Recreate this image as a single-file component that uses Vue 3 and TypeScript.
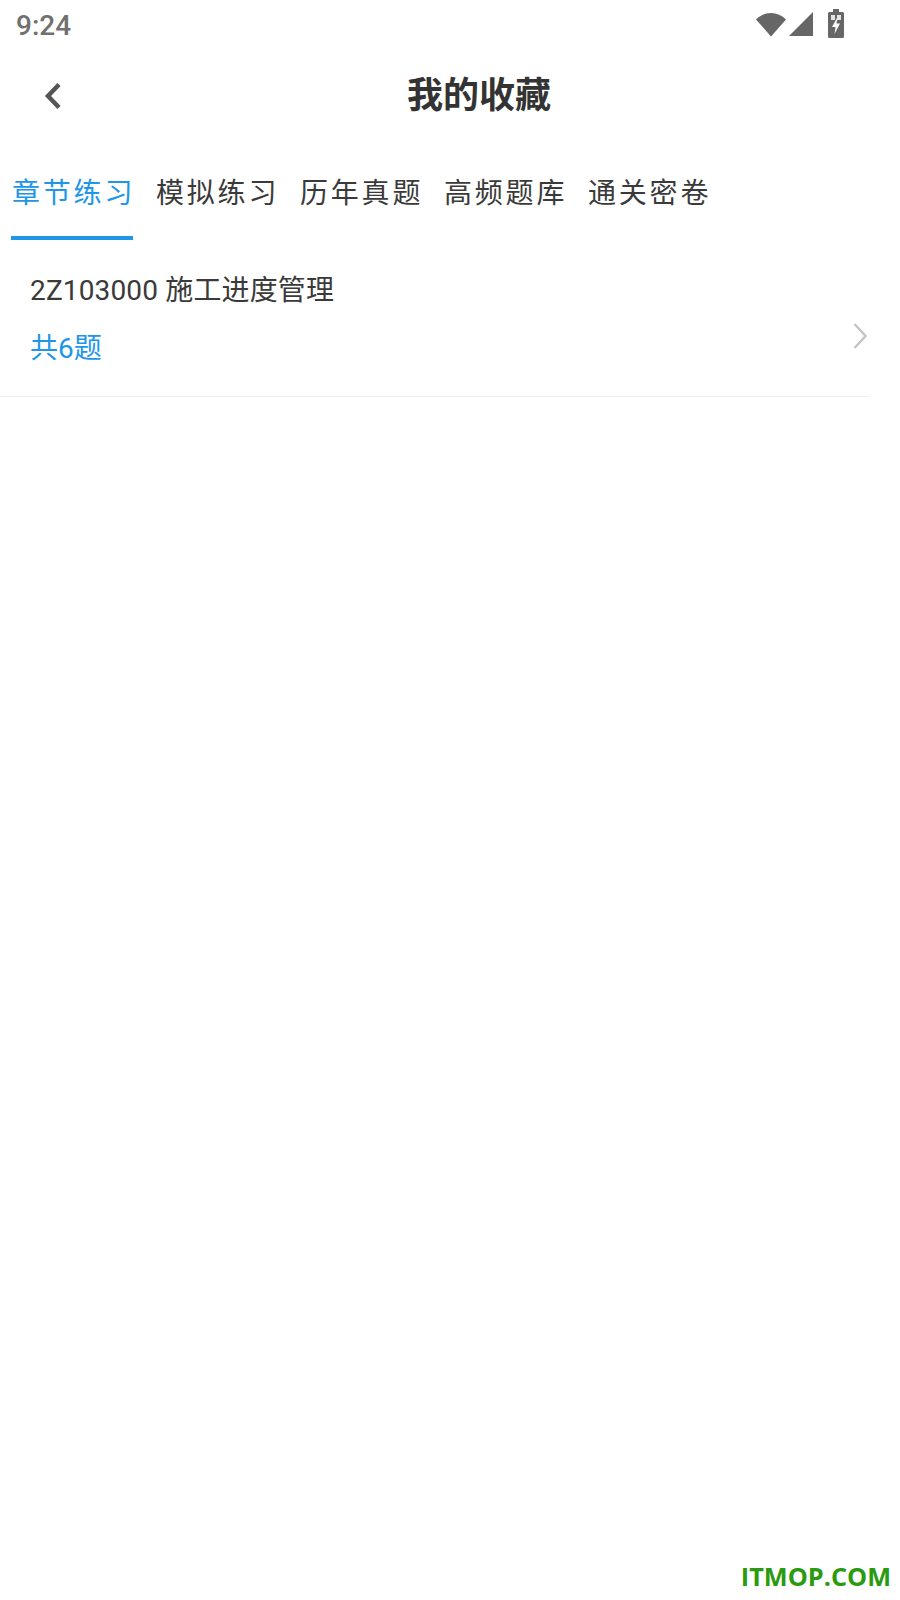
<template>
  <div class="page">
    <div class="status-bar">
      <span class="time">9:24</span>
      <div class="status-icons">
        <svg class="ic-wifi" width="32" height="26" viewBox="0 0 32 26">
          <path d="M1 8.500C5 4.200 10.200 2 16 2s11 2.200 15 6.500L16 25.500z" fill="#666" />
        </svg>
        <svg class="ic-signal" width="26" height="26" viewBox="0 0 26 26">
          <path d="M1 25L25 1V25z" fill="#666" />
        </svg>
        <svg class="ic-battery" width="16" height="30" viewBox="0 0 16 30">
          <path d="M5 0h6v3h3.500a1.500 1.500 0 0 1 1.500 1.500v23a1.500 1.500 0 0 1-1.500 1.500h-13A1.500 1.500 0 0 1 0 27.500v-23A1.500 1.500 0 0 1 1.500 3H5z" fill="#666" />
          <path d="M3 6h4v5h-4zM9 6h4v5h-4z" fill="#e4e4e4" />
          <path d="M9.500 8L4 18h3.500l-1 7L12 14.500H8.500z" fill="#fff" />
        </svg>
      </div>
    </div>

    <header class="nav">
      <svg class="back" width="20" height="28" viewBox="0 0 20 28">
        <path d="M16 2.500L5 14l11 11.500" fill="none" stroke="#555" stroke-width="4.500" />
      </svg>
      <h1 class="title">我的收藏</h1>
    </header>

    <div class="tabs">
      <div
        v-for="(tab, i) in tabs"
        :key="tab"
        class="tab"
        :class="{ active: i === 0 }"
      >
        {{ tab }}
      </div>
    </div>

    <div class="row">
      <div class="row-text">
        <div class="row-title">2Z103000 施工进度管理</div>
        <div class="row-count">共6题</div>
      </div>
      <svg class="arrow" width="14" height="26" viewBox="0 0 14 26">
        <path d="M1.500 1L12.500 13 1.500 25" fill="none" stroke="#c4c4c4" stroke-width="2.400" />
      </svg>
    </div>

    <div class="watermark">ITMOP.COM</div>
  </div>
</template>

<script setup lang="ts">
const tabs: string[] = ['章节练习', '模拟练习', '历年真题', '高频题库', '通关密卷']
</script>

<style>
html,
body {
  margin: 0;
  background: #fff;
}
</style>

<style scoped>
.page {
  position: relative;
  width: 900px;
  height: 1600px;
  overflow: hidden;
  background: #fff;
  font-family: Roboto, "Noto Sans CJK SC", sans-serif;
}

.status-bar {
  display: flex;
  align-items: center;
  justify-content: space-between;
  height: 50px;
  padding: 0 56px 0 16px;
}

.time {
  font-size: 28px;
  font-weight: 500;
  color: #707070;
}

.status-icons {
  display: flex;
  align-items: center;
  gap: 1px;
  margin-top: -2px;
}

.ic-battery {
  margin-left: 13px;
}

.nav {
  display: flex;
  align-items: center;
  justify-content: center;
  height: 90px;
  padding: 0 0 6px 58px;
  box-sizing: border-box;
  position: relative;
}

.back {
  position: absolute;
  left: 43px;
  top: 32px;
}

.title {
  margin: 0;
  font-size: 36px;
  font-weight: 700;
  color: #333;
}

.tabs {
  display: flex;
  gap: 22px;
  height: 100px;
  padding-left: 11px;
}

.tab {
  width: 122px;
  height: 100px;
  box-sizing: border-box;
  padding: 34px 0 0 1px;
  font-size: 28px;
  line-height: 40px;
  letter-spacing: 2.800px;
  white-space: nowrap;
  color: #3a3a3a;
}

.tab.active {
  color: #2196e8;
  border-bottom: 4px solid #2196e8;
}

.row {
  display: flex;
  align-items: center;
  justify-content: space-between;
  width: 870px;
  height: 157px;
  box-sizing: border-box;
  padding: 3px 0 0 30px;
  border-bottom: 1px solid #eee;
  position: relative;
}

.row-title {
  font-size: 28px;
  line-height: 40px;
  letter-spacing: 0.150px;
  color: #3a3a3a;
}

.row-count {
  margin-top: 18px;
  font-size: 28px;
  line-height: 40px;
  color: #2196e8;
}

.arrow {
  position: absolute;
  right: 3px;
  top: 83px;
}

.watermark {
  position: absolute;
  right: 9px;
  bottom: 7px;
  font-family: "Open Sans", sans-serif;
  font-size: 25.300px;
  font-weight: 700;
  color: #2a9a10;
}
</style>
